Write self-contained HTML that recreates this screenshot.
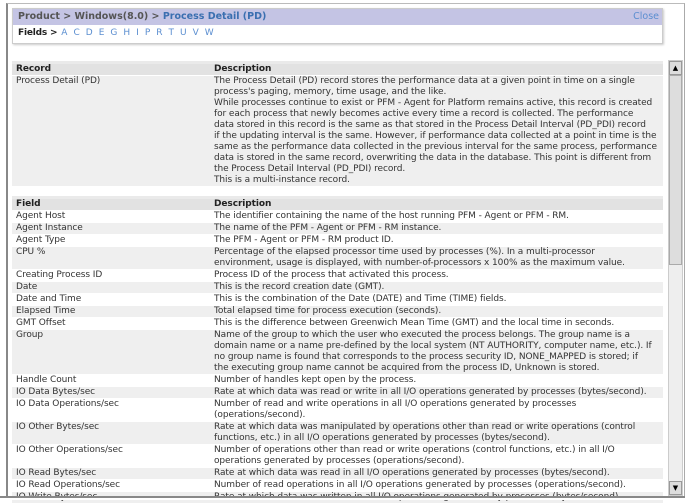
<!DOCTYPE html>
<html><head><meta charset="utf-8"><style>
*{box-sizing:border-box}
body{margin:0;width:685px;height:500px;overflow:hidden;background:#fff;font-family:"DejaVu Sans","Liberation Sans",sans-serif;font-size:9px;color:#333}
#frame{position:absolute;left:6px;top:3px;width:679px;height:495px;border:2px solid #888;border-right:1px solid #aaa;border-top:1px solid #bbb}
#hdr{position:absolute;left:12px;top:8px;width:651px;height:36px;border:1px solid #ccc;box-shadow:1px 1px 2px #ccc}
#band{height:16px;background:#c4c4e4;padding:2px 5px;font-weight:bold;font-size:9.5px;color:#555}
#band a{color:#3a6fb0}
#close{position:absolute;right:3px;top:2px;color:#5b8ed0;font-weight:normal}
#fields{padding:3px 5px;font-weight:bold;font-size:9px;color:#222;letter-spacing:-0.2px}
#fields span{color:#5b8ed0;font-weight:normal;margin-left:6px;letter-spacing:0}
#fields span:first-child{margin-left:4px}
table{position:absolute;left:12px;width:651px;border-collapse:collapse;table-layout:fixed;letter-spacing:-0.08px}
td,th{padding:0 4px;line-height:11px;vertical-align:top;text-align:left;border-bottom:1px solid #fff;white-space:nowrap;overflow:hidden}
th{background:#e2e2e2;font-weight:bold;color:#222;border-top:3px solid #eaeaea}
tr.g td{background:#efefef}
#sb{position:absolute;left:668px;top:60px;width:15px;height:436px;background:#eee;border:1px solid #ccc}
#sb .b{position:absolute;left:0;width:13px;height:14px;background:#ddd;border:1px solid #999;font-size:7px;text-align:center;line-height:12px;color:#000}
#sb .t{position:absolute;left:0;top:14px;width:13px;height:190px;background:#ddd;border:1px solid #aaa}
</style></head><body>
<div id="frame"></div>
<div id="hdr"><div id="band">Product &gt; Windows(8.0) &gt; <a>Process Detail (PD)</a><span id="close">Close</span></div>
<div id="fields">Fields &gt;<span>A</span><span>C</span><span>D</span><span>E</span><span>G</span><span>H</span><span>I</span><span>P</span><span>R</span><span>T</span><span>U</span><span>V</span><span>W</span></div></div>
<table style="top:61px"><col style="width:198px"><col>
<tr><th>Record</th><th>Description</th></tr>
<tr class="g"><td>Process Detail (PD)</td><td>The Process Detail (PD) record stores the performance data at a given point in time on a single<br>process's paging, memory, time usage, and the like.<br>While processes continue to exist or PFM - Agent for Platform remains active, this record is created<br>for each process that newly becomes active every time a record is collected. The performance<br>data stored in this record is the same as that stored in the Process Detail Interval (PD_PDI) record<br>if the updating interval is the same. However, if performance data collected at a point in time is the<br>same as the performance data collected in the previous interval for the same process, performance<br>data is stored in the same record, overwriting the data in the database. This point is different from<br>the Process Detail Interval (PD_PDI) record.<br>This is a multi-instance record.</td></tr>
</table>
<table style="top:196px"><col style="width:198px"><col>
<tr><th>Field</th><th>Description</th></tr>
<tr><td>Agent Host</td><td>The identifier containing the name of the host running PFM - Agent or PFM - RM.</td></tr>
<tr class="g"><td>Agent Instance</td><td>The name of the PFM - Agent or PFM - RM instance.</td></tr>
<tr><td>Agent Type</td><td>The PFM - Agent or PFM - RM product ID.</td></tr>
<tr class="g"><td>CPU %</td><td>Percentage of the elapsed processor time used by processes (%). In a multi-processor<br>environment, usage is displayed, with number-of-processors x 100% as the maximum value.</td></tr>
<tr><td>Creating Process ID</td><td>Process ID of the process that activated this process.</td></tr>
<tr class="g"><td>Date</td><td>This is the record creation date (GMT).</td></tr>
<tr><td>Date and Time</td><td>This is the combination of the Date (DATE) and Time (TIME) fields.</td></tr>
<tr class="g"><td>Elapsed Time</td><td>Total elapsed time for process execution (seconds).</td></tr>
<tr><td>GMT Offset</td><td>This is the difference between Greenwich Mean Time (GMT) and the local time in seconds.</td></tr>
<tr class="g"><td>Group</td><td>Name of the group to which the user who executed the process belongs. The group name is a<br>domain name or a name pre-defined by the local system (NT AUTHORITY, computer name, etc.). If<br>no group name is found that corresponds to the process security ID, NONE_MAPPED is stored; if<br>the executing group name cannot be acquired from the process ID, Unknown is stored.</td></tr>
<tr><td>Handle Count</td><td>Number of handles kept open by the process.</td></tr>
<tr class="g"><td>IO Data Bytes/sec</td><td>Rate at which data was read or write in all I/O operations generated by processes (bytes/second).</td></tr>
<tr><td>IO Data Operations/sec</td><td>Number of read and write operations in all I/O operations generated by processes<br>(operations/second).</td></tr>
<tr class="g"><td>IO Other Bytes/sec</td><td>Rate at which data was manipulated by operations other than read or write operations (control<br>functions, etc.) in all I/O operations generated by processes (bytes/second).</td></tr>
<tr><td>IO Other Operations/sec</td><td>Number of operations other than read or write operations (control functions, etc.) in all I/O<br>operations generated by processes (operations/second).</td></tr>
<tr class="g"><td>IO Read Bytes/sec</td><td>Rate at which data was read in all I/O operations generated by processes (bytes/second).</td></tr>
<tr><td>IO Read Operations/sec</td><td>Number of read operations in all I/O operations generated by processes (operations/second).</td></tr>
<tr class="g"><td>IO Write Bytes/sec</td><td>Rate at which data was written in all I/O operations generated by processes (bytes/second).</td></tr>
</table>
<div style="position:absolute;left:0;top:496px;width:685px;height:4px;background:#fff;border-top:2px solid #888"></div>
<div id="sb"><div class="b" style="top:0">▲</div><div class="t"></div><div class="b" style="bottom:0">▼</div></div>
</body></html>
